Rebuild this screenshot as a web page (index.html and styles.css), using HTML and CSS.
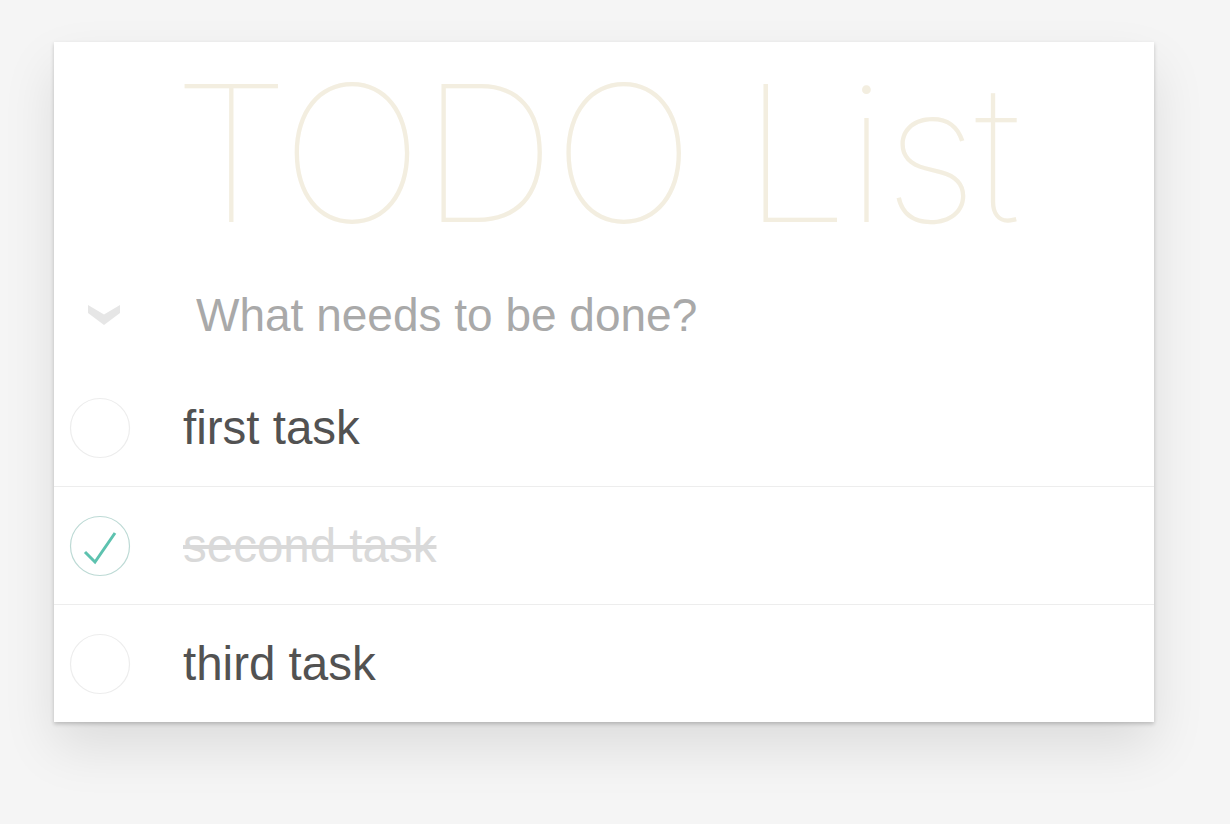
FILE: index.html
```html
<!DOCTYPE html>
<html lang="en">
<head>
<meta charset="utf-8">
<title>TODO List</title>
<link rel="stylesheet" href="styles.css">
</head>
<body>
<section class="app">
  <h1 class="title">TODO List</h1>
  <div class="new-todo">
    <span class="toggle-all">
      <svg width="32" height="20" viewBox="0 0 32 20"><polygon points="0,0 16,9.5 32,0 32,8 16,20 0,8" fill="#e6e6e6"/></svg>
    </span>
    <input class="new-input" type="text" placeholder="What needs to be done?">
  </div>
  <ul class="list">
    <li class="item">
      <span class="check">
        <svg width="62" height="62" viewBox="0 0 62 62"><circle cx="31" cy="31" r="29.5" fill="none" stroke="#ededed" stroke-width="1.2"/></svg>
      </span>
      <span class="label">first task</span>
    </li>
    <li class="item done">
      <span class="check">
        <svg width="62" height="62" viewBox="0 0 62 62"><circle cx="31" cy="31" r="29.5" fill="none" stroke="#bddad5" stroke-width="1.2"/><polyline points="16,37 26,47 46,18" fill="none" stroke="#5dc2af" stroke-width="3"/></svg>
      </span>
      <span class="label">second task</span>
    </li>
    <li class="item">
      <span class="check">
        <svg width="62" height="62" viewBox="0 0 62 62"><circle cx="31" cy="31" r="29.5" fill="none" stroke="#ededed" stroke-width="1.2"/></svg>
      </span>
      <span class="label">third task</span>
    </li>
  </ul>
</section>
</body>
</html>
```
FILE: styles.css
```css
* { box-sizing: border-box; }
html, body { height: 100%; }
body {
  margin: 0;
  background: #f5f5f5;
  font-family: "Liberation Sans", Arial, sans-serif;
  color: #4d4d4d;
  padding: 42px 0 0 54px;
}
.app {
  width: 1100px;
  background: #fff;
  box-shadow: 0 2px 4px rgba(0,0,0,0.2), 0 25px 50px rgba(0,0,0,0.1);
  display: flex;
  flex-direction: column;
}
.title {
  margin: 0;
  height: 209px;
  font-family: Inter, Roboto, "Liberation Sans", sans-serif;
  font-weight: 100;
  font-size: 190px;
  line-height: 190px;
  color: #f3eee0;
  text-align: center;
  padding-top: 16px;
  padding-right: 18px;
  letter-spacing: -3px;
  white-space: nowrap;
}
.new-todo {
  height: 118px;
  display: flex;
  align-items: center;
  padding-top: 9px;
}
.toggle-all {
  width: 142px;
  padding-left: 34px;
  display: flex;
  align-items: center;
}
.toggle-all svg { display: block; }
.new-input {
  flex: 1;
  border: none;
  outline: none;
  background: transparent;
  font-family: "Liberation Sans", Arial, sans-serif;
  font-size: 46px;
  color: #4d4d4d;
  padding: 0;
}
.new-input::placeholder { color: #a9a9a9; opacity: 1; }
.list { list-style: none; margin: 0; padding: 0; }
.item {
  height: 118px;
  display: flex;
  align-items: center;
  border-bottom: 1px solid #ededed;
}
.item:last-child { border-bottom: none; height: 117px; }
.check {
  width: 129px;
  padding-left: 15px;
  display: flex;
  align-items: center;
}
.check svg { display: block; }
.label {
  font-size: 47.5px;
  line-height: 1.2;
  color: #525252;
}
.done .label {
  color: #d9d9d9;
  text-decoration: line-through;
}
```
